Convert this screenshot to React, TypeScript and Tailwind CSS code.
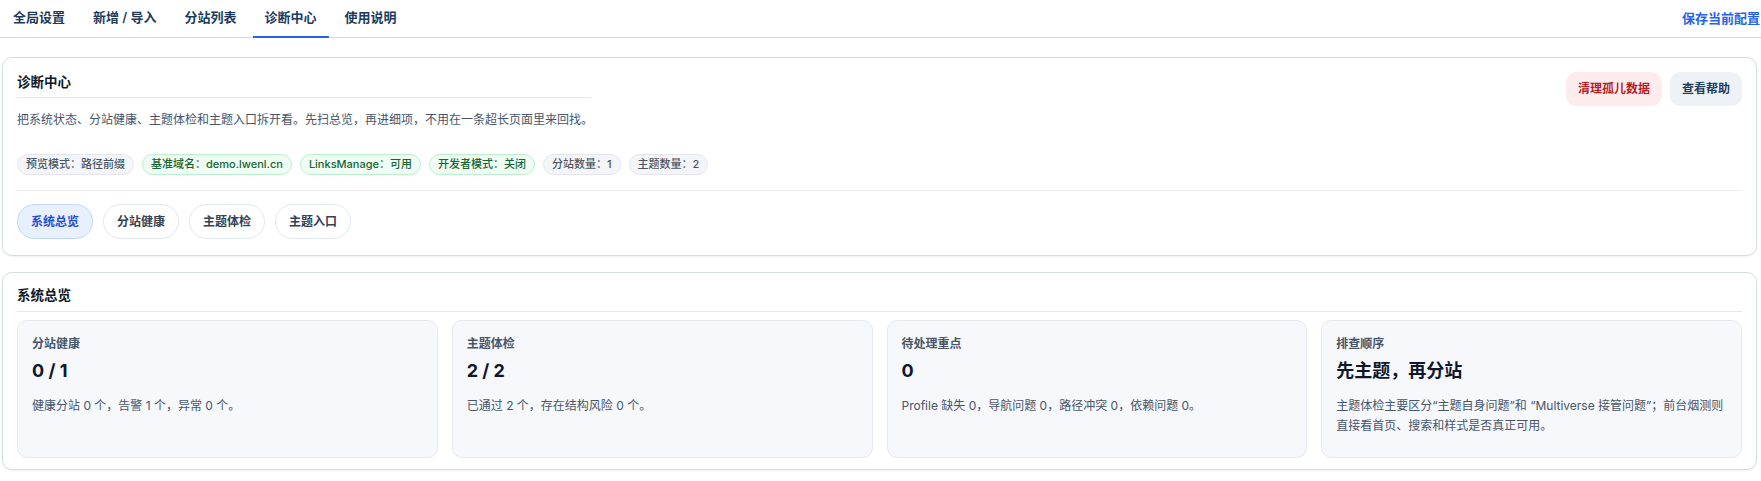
import { useState } from "react";

type Chip = { label: string; tone: "gray" | "green" };

const chips: Chip[] = [
  { label: "预览模式：路径前缀", tone: "gray" },
  { label: "基准域名：demo.lwenl.cn", tone: "green" },
  { label: "LinksManage：可用", tone: "green" },
  { label: "开发者模式：关闭", tone: "green" },
  { label: "分站数量：1", tone: "gray" },
  { label: "主题数量：2", tone: "gray" },
];

const navTabs = ["全局设置", "新增 / 导入", "分站列表", "诊断中心", "使用说明"];
const subTabs = ["系统总览", "分站健康", "主题体检", "主题入口"];

const cards = [
  { label: "分站健康", value: "0 / 1", desc: "健康分站 0 个，告警 1 个，异常 0 个。" },
  { label: "主题体检", value: "2 / 2", desc: "已通过 2 个，存在结构风险 0 个。" },
  {
    label: "待处理重点",
    value: "0",
    desc: "Profile 缺失 0，导航问题 0，路径冲突 0，依赖问题 0。",
  },
  {
    label: "排查顺序",
    value: "先主题，再分站",
    desc: "主题体检主要区分\u201C主题自身问题\u201D和 \u201CMultiverse 接管问题\u201D；前台烟测则直接看首页、搜索和样式是否真正可用。",
  },
];

export default function App() {
  const [tab, setTab] = useState(3);
  const [sub, setSub] = useState(0);

  return (
    <div className="min-h-screen bg-white font-['Inter','Noto_Sans_CJK_SC',sans-serif] text-[#0f172a]">
      {/* top nav */}
      <nav className="flex h-[38px] items-stretch justify-between border-b border-[#cfd8e3]">
        <div className="flex gap-1 pl-[1px]">
          {navTabs.map((t, i) => (
            <button
              key={t}
              onClick={() => setTab(i)}
              className={`-mb-px flex items-center border-b-2 px-3 text-[13px] font-semibold text-[#1e3a5c] ${
                tab === i ? "border-[#2563eb]" : "border-transparent"
              }`}
            >
              {t}
            </button>
          ))}
        </div>
        <button className="flex items-center pr-[1px] text-[13px] font-bold text-[#2563eb]">
          保存当前配置
        </button>
      </nav>

      {/* diagnostics header panel */}
      <section className="ml-0.5 mr-1 mt-[19px] rounded-[10px] border border-[#d5dce6] px-[14px] pb-4 pt-[14px] shadow-[0_1px_2px_rgba(15,23,42,0.06)]">
        <div className="flex items-start justify-between">
          <div>
            <h2 className="w-[574px] border-b border-[#e2e8f0] pb-[5px] text-[13.5px] font-bold leading-5 text-[#111827]">
              诊断中心
            </h2>
            <p className="mt-[13px] whitespace-nowrap text-[12px] leading-[18px] text-[#475569]">
              把系统状态、分站健康、主题体检和主题入口拆开看。先扫总览，再进细项，不用在一条超长页面里来回找。
            </p>
          </div>
          <div className="flex gap-2">
            <button className="h-[34px] rounded-[10px] bg-[#fdecee] px-3 text-[12px] font-semibold text-[#b91c1c]">
              清理孤儿数据
            </button>
            <button className="h-[34px] rounded-[10px] bg-[#eef1f5] px-3 text-[12px] font-semibold text-[#1e3a5c]">
              查看帮助
            </button>
          </div>
        </div>

        <div className="mt-[25px] flex gap-2">
          {chips.map((c) => (
            <span
              key={c.label}
              className={`flex h-[21px] items-center rounded-full border px-2 text-[11px] font-medium ${
                c.tone === "green"
                  ? "border-[#bbf0cc] bg-[#effcf3] text-[#166534]"
                  : "border-[#e3e7ed] bg-[#f3f5f8] text-[#4b5563]"
              }`}
            >
              {c.label}
            </span>
          ))}
        </div>

        <div className="mt-[15px] border-t border-[#e8ecf2]" />

        <div className="mt-[13px] flex gap-[10px]">
          {subTabs.map((s, i) => (
            <button
              key={s}
              onClick={() => setSub(i)}
              className={`h-[35px] rounded-full border px-[13px] text-[12px] font-semibold ${
                sub === i
                  ? "border-[#bfd6fb] bg-[#e8f0fe] text-[#1d4ed8]"
                  : "border-[#e2e8f0] bg-white text-[#334155]"
              }`}
            >
              {s}
            </button>
          ))}
        </div>
      </section>

      {/* overview panel */}
      <section className="ml-0.5 mr-1 mt-4 rounded-[10px] border border-[#d5dce6] px-[14px] pb-[11px] pt-3 shadow-[0_1px_2px_rgba(15,23,42,0.06)]">
        <h2 className="border-b border-[#e2e8f0] pb-[6px] text-[13.5px] font-bold leading-5 text-[#111827]">
          系统总览
        </h2>
        <div className="mt-2 grid grid-cols-4 gap-[14px]">
          {cards.map((c) => (
            <div
              key={c.label}
              className="h-[138px] rounded-[10px] border border-[#e5e9f0] bg-[#f6f8fb] px-[14px] pt-[14px]"
            >
              <div className="text-[12px] font-semibold leading-[18px] text-[#475569]">{c.label}</div>
              <div className="mt-[5px] text-[18px] font-bold leading-[26px] text-[#0f172a]">{c.value}</div>
              <p className="mt-3 text-[12px] leading-5 text-[#475569]">{c.desc}</p>
            </div>
          ))}
        </div>
      </section>
    </div>
  );
}
